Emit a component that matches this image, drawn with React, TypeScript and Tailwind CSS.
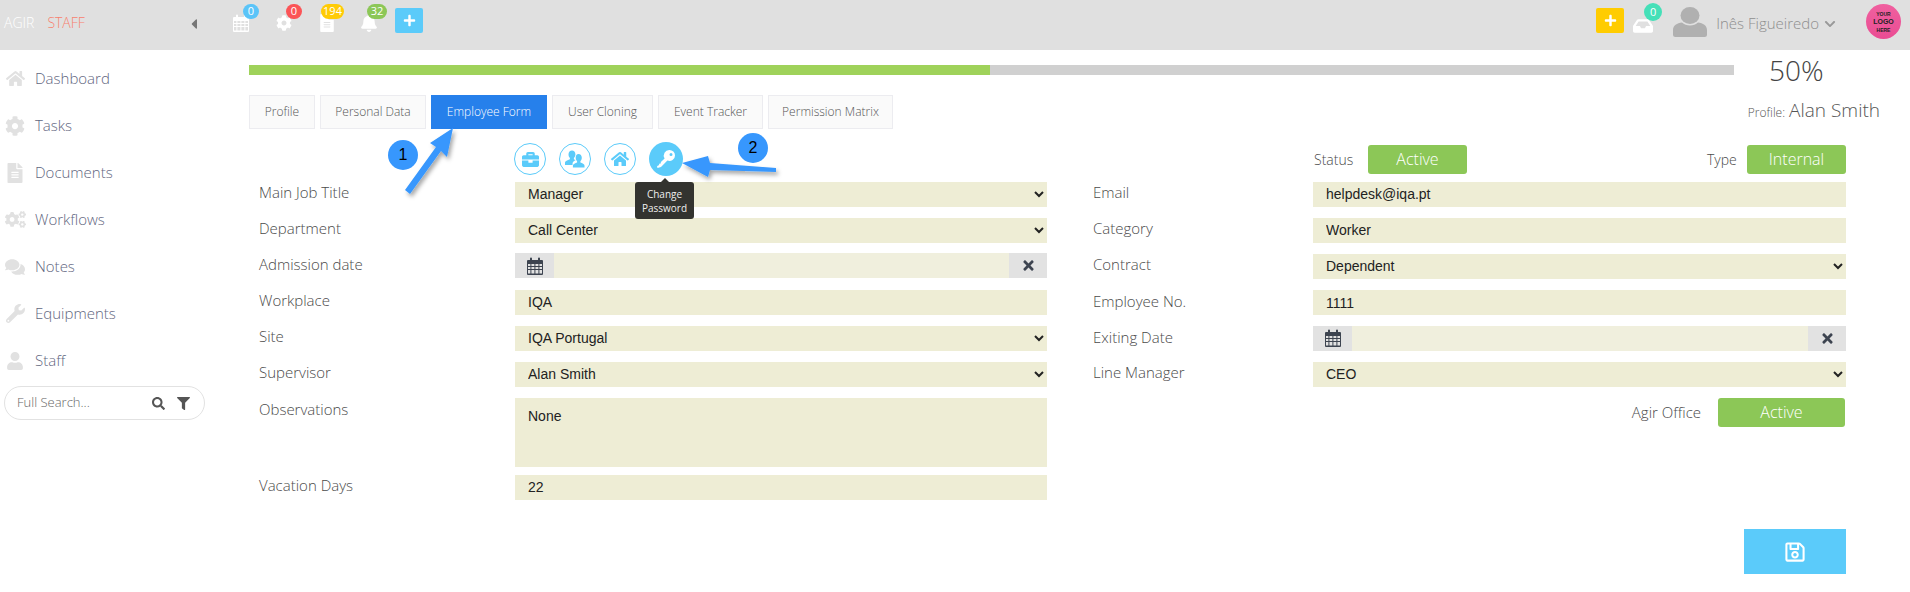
import React from "react";
import { FaHome, FaCog, FaFileAlt, FaCogs, FaComments, FaWrench, FaUser, FaSearch, FaFilter, FaBell, FaPlus, FaInbox, FaChevronDown, FaTimes, FaBriefcase, FaRegSave, FaCaretLeft } from "react-icons/fa";

const nav = [
  ["Dashboard", FaHome, "text-[19px]"],
  ["Tasks", FaCog, "text-[20px]"],
  ["Documents", FaFileAlt, "text-[20px]"],
  ["Workflows", FaCogs, "text-[21px]"],
  ["Notes", FaComments, "text-[20px]"],
  ["Equipments", FaWrench, "text-[19px]"],
  ["Staff", FaUser, "text-[18px]"],
] as const;

const tabs = [
  ["Profile", "w-[66px]"],
  ["Personal Data", "w-[106px]"],
  ["Employee Form", "w-[116px]"],
  ["User Cloning", "w-[101px]"],
  ["Event Tracker", "w-[105px]"],
  ["Permission Matrix", "w-[125px]"],
] as const;

function Badge({ text, cls }: { text: string; cls: string }) {
  return (
    <span className={`absolute -top-[11px] flex h-[15px] items-center justify-center rounded-full text-[11px] font-normal text-white ${cls}`}>
      {text}
    </span>
  );
}

function Label({ children }: { children: React.ReactNode }) {
  return <div className="text-[15px] font-light leading-[20px] text-[#4a4a4a]">{children}</div>;
}

const fieldCls = "h-[25px] w-full bg-[#eeedd5] font-['Liberation_Sans',Arial,sans-serif] text-[14px] text-[#222] outline-none";

function Sel({ v }: { v: string }) {
  return (
    <select defaultValue={v} className={`${fieldCls} pl-[9px]`}>
      <option>{v}</option>
    </select>
  );
}

function Inp({ v }: { v: string }) {
  return <input readOnly value={v} className={`${fieldCls} pl-[13px]`} />;
}

function CalIcon({ className }: { className?: string }) {
  return (
    <svg className={className} width="16" height="18" viewBox="0 0 16 18" fill="currentColor">
      <path fillRule="evenodd" d="M1 3h2V1.5a1 1 0 0 1 2 0V3h6V1.5a1 1 0 0 1 2 0V3h2a1 1 0 0 1 1 1v13a1 1 0 0 1-1 1H1a1 1 0 0 1-1-1V4a1 1 0 0 1 1-1Z M1 7v2h2.4V7Z M4.4 7v2h3V7Z M8.4 7v2h3V7Z M12.4 7v2H15V7Z M1 10v2h2.4v-2Z M4.4 10v2h3v-2Z M8.4 10v2h3v-2Z M12.4 10v2H15v-2Z M1 13v3.5h2.4V13Z M4.4 13v3.5h3V13Z M8.4 13v3.5h3V13Z M12.4 13v3.5H15V13Z" />
    </svg>
  );
}

function DateField() {
  return (
    <div className="flex h-[25px] w-full bg-[#f0efdd]">
      <div className="flex w-[39px] items-center justify-center bg-[#e2e2e2] text-[#3d4450]">
        <CalIcon />
      </div>
      <div className="flex-1" />
      <div className="flex w-[38px] items-center justify-center bg-[#e2e2e2]">
        <FaTimes className="text-[15px] text-[#3d4450]" />
      </div>
    </div>
  );
}

function Row({ label, labelW, children }: { label: string; labelW: string; children: React.ReactNode }) {
  return (
    <div className="flex items-start">
      <div className={`${labelW} mt-[1px] shrink-0`}>
        <Label>{label}</Label>
      </div>
      <div className="min-w-0 flex-1">{children}</div>
    </div>
  );
}

function Round({ children, active }: { children: React.ReactNode; active?: boolean }) {
  return (
    <div
      className={`flex shrink-0 items-center justify-center rounded-full ${
        active ? "h-[34px] w-[34px] bg-[#5bcbfa] text-white" : "h-[32px] w-[32px] border border-[#5bcbfa] bg-white text-[#5bcbfa]"
      }`}
    >
      {children}
    </div>
  );
}

function Pill({ text, cls }: { text: string; cls: string }) {
  return (
    <div className={`flex h-[29px] items-center justify-center rounded-[3px] bg-[#8cc757] text-[16px] font-light text-white ${cls}`}>
      {text}
    </div>
  );
}

function KeyIcon() {
  return (
    <svg width="22" height="22" viewBox="0 0 22 22" fill="currentColor">
      <path fillRule="evenodd" d="M14.5 2 a5.5 5.5 0 0 1 5.5 5.5 a5.5 5.5 0 0 1-7.6 5.1 L6 19 l-3.5 1 L2 18.5 l1-1 1-.2 .2-1.5 1.5-.2 .2-1.5 3.7-3.7 A5.5 5.5 0 0 1 14.5 2 Z M16 5 a1.5 1.5 0 1 0 0 3 a1.5 1.5 0 0 0 0-3 Z" />
    </svg>
  );
}

function TwoUsers() {
  return (
    <svg width="20" height="20" viewBox="0 0 20 20" fill="currentColor">
      <path d="M7 1.5c2 0 3.4 1.6 3.4 3.8 0 1.6-.7 3-1.5 3.7v1.2c.6.3 1.2.6 1.8.9-1.6.8-3.2 1.9-3.2 3.9v1H0v-2.4c0-1.6 2.5-2.4 4.9-3.4V9c-.8-.7-1.4-2.1-1.4-3.7C3.5 3.1 5 1.5 7 1.5Z" />
      <path d="M13.5 5c2 0 3.3 1.6 3.3 3.7 0 1.5-.6 2.8-1.4 3.5v1.3c1.8.8 4.1 1.4 4.1 3v2H7.9v-2c0-1.6 2.6-2.2 4.2-3v-1.3c-.8-.7-1.4-2-1.4-3.5 0-2.1 1-3.7 2.8-3.7Z" />
    </svg>
  );
}

function BigUser() {
  return (
    <svg className="ml-[20px] mt-[7px]" width="34" height="30" viewBox="0 0 34 30" fill="#b0b0b0">
      <ellipse cx="17" cy="8.5" rx="9.5" ry="8.5" />
      <path d="M9 15.5c2 2 5 3 8 3s6-1 8-3c5 .6 9 3 9 7.5v4.5a2.5 2.5 0 0 1-2.5 2.5h-29A2.5 2.5 0 0 1 0 27.500V23c0-4.500 4-6.900 9-7.500Z" />
    </svg>
  );
}

export default function App() {
  return (
    <div className="h-[592px] w-[1910px] overflow-hidden bg-white font-['Open_Sans',sans-serif]">
      <header className="flex h-[50px] items-start bg-[#e0e0e0]">
        <div className="flex w-[190px] shrink-0 items-center gap-[13px] pl-[4px] pt-[13px] text-[14px] font-light leading-[20px]">
          <span className="text-white">AGIR</span>
          <span className="text-[#f8806e]">STAFF</span>
        </div>
        <FaCaretLeft className="mt-[16px] w-[8px] text-[16px] text-[#777]" />
        <div className="ml-[35px] flex items-start">
          <div className="relative mt-[14px] h-[18px] w-[16px] text-white">
            <CalIcon />
            <Badge text="0" cls="left-[10px] w-[16px] !-top-[10px] bg-[#5bc4f8]" />
          </div>
          <div className="relative ml-[27px] mt-[15px] h-[16px] w-[16px] text-white">
            <FaCog className="text-[16px]" />
            <Badge text="0" cls="left-[10px] w-[16px] bg-[#fb5457]" />
          </div>
          <div className="relative ml-[26px] mt-[14px] h-[18px] w-[16px] text-white">
            <FaFileAlt className="text-[18px]" />
            <Badge text="194" cls="left-[3px] w-[23px] !-top-[10px] bg-[#ffcb05]" />
          </div>
          <div className="relative ml-[26px] mt-[14px] h-[18px] w-[17px] text-white">
            <FaBell className="text-[18px]" />
            <Badge text="32" cls="left-[7px] w-[20px] !-top-[10px] bg-[#8cc757]" />
          </div>
          <div className="ml-[18px] mt-[8px] flex h-[25px] w-[28px] items-center justify-center rounded-[2px] bg-[#5bcbfa]">
            <FaPlus className="text-[13px] text-white" />
          </div>
        </div>
        <div className="ml-auto flex items-start">
          <div className="mt-[8px] flex h-[25px] w-[28px] items-center justify-center rounded-[2px] bg-[#ffcc00]">
            <FaPlus className="text-[13px] text-white" />
          </div>
          <div className="relative ml-[9px] mt-[16px] h-[16px] w-[20px] text-white">
            <FaInbox className="text-[20px]" />
            <span className="absolute -top-[13px] left-[11px] flex h-[18px] w-[18px] items-center justify-center rounded-full bg-[#45e0b8] text-[11px] text-white">0</span>
          </div>
          <BigUser />
          <span className="ml-[9px] mt-[11px] text-[15px] font-light leading-[24px] text-[#8f8f8f]">Inês Figueiredo</span>
          <FaChevronDown className="ml-[5px] mt-[18px] text-[12px] text-[#999]" />
          <div className="ml-[30px] mr-[9px] mt-[4px] flex h-[35px] w-[35px] flex-col items-center justify-center rounded-full bg-gradient-to-b from-[#f0609f] to-[#ea4c93] font-['Liberation_Sans',sans-serif] font-bold leading-[8px] text-[#222]">
            <span className="text-[5px]">YOUR</span>
            <span className="text-[7px]">LOGO</span>
            <span className="text-[5px]">HERE</span>
          </div>
        </div>
      </header>

      <div className="flex">
        <aside className="w-[249px] shrink-0 pt-[5px]">
          {nav.map(([label, Icon, size]) => (
            <div key={label} className="flex h-[47px] items-center">
              <div className="flex w-[35px] justify-center pr-[5px] text-[#e1e1e1]">
                <Icon className={size} />
              </div>
              <span className="text-[15px] font-light text-[#5f6680]">{label}</span>
            </div>
          ))}
          <div className="ml-[4px] mt-[2px] flex h-[34px] w-[201px] items-center rounded-full border border-[#e2e2e2] pl-[12px] pr-[14px]">
            <span className="flex-1 text-[13px] font-light text-[#666]">Full Search...</span>
            <FaSearch className="text-[13px] text-[#555]" />
            <FaFilter className="ml-[12px] text-[13px] text-[#555]" />
          </div>
        </aside>

        <main className="relative w-[1597px] pt-[15px]">
          <div className="flex h-[10px] items-start">
            <div className="flex h-[10px] w-[1485px] shrink-0 bg-[#d0d0d0]">
              <div className="h-full w-[741px] bg-[#9fd25a]" />
            </div>
            <div className="ml-[35px] -mt-[15px] text-[28px] font-light leading-[40px] text-[#444]">50%</div>
          </div>

          <div className="flex w-[1631px] items-start justify-between">
            <div className="mt-[20px] flex gap-[5px]">
              {tabs.map(([t, w]) => (
                <div
                  key={t}
                  className={`flex h-[34px] items-center justify-center border text-[12px] font-light ${w} ${
                    t === "Employee Form" ? "border-[#2680eb] bg-[#2680eb] text-white" : "border-[#ececf0] bg-[#fafafa] text-[#555]"
                  }`}
                >
                  {t}
                </div>
              ))}
            </div>
            <div className="mt-[23px] flex items-baseline text-[#555]">
              <span className="text-[12px] font-light">Profile:</span>
              <span className="ml-[4px] text-[19px] font-light leading-[24px]">Alan Smith</span>
            </div>
          </div>

          <div className="mt-[13px] flex h-[34px] items-center">
            <div className="ml-[265px] flex items-center gap-[13px]">
              <Round><FaBriefcase className="text-[17px]" /></Round>
              <Round><TwoUsers /></Round>
              <Round><FaHome className="text-[18px]" /></Round>
              <Round active><KeyIcon /></Round>
            </div>
            <div className="ml-[631px] flex items-center">
              <span className="w-[54px] text-[14px] font-light text-[#4a4a4a]">Status</span>
              <Pill text="Active" cls="w-[99px]" />
            </div>
            <div className="ml-[240px] flex items-center">
              <span className="w-[40px] text-[14px] font-light text-[#4a4a4a]">Type</span>
              <Pill text="Internal" cls="w-[99px]" />
            </div>
          </div>

          <div className="mt-[5px] flex items-start">
            <div className="ml-[10px] flex w-[788px] flex-col gap-[10.7px]">
              <Row label="Main Job Title" labelW="w-[256px]"><Sel v="Manager" /></Row>
              <Row label="Department" labelW="w-[256px]"><Sel v="Call Center" /></Row>
              <Row label="Admission date" labelW="w-[256px]"><DateField /></Row>
              <Row label="Workplace" labelW="w-[256px]"><Inp v="IQA" /></Row>
              <Row label="Site" labelW="w-[256px]"><Sel v="IQA Portugal" /></Row>
              <Row label="Supervisor" labelW="w-[256px]"><Sel v="Alan Smith" /></Row>
              <Row label="Observations" labelW="w-[256px]">
                <textarea readOnly value="None" className={`${fieldCls} !h-[69px] resize-none pl-[13px] pt-[8px] block`} />
              </Row>
              <div className="-mt-[3px]">
                <Row label="Vacation Days" labelW="w-[256px]"><Inp v="22" /></Row>
              </div>
            </div>

            <div className="ml-[46px] flex w-[753px] flex-col gap-[10.7px]">
              <Row label="Email" labelW="w-[220px]"><Inp v="helpdesk@iqa.pt" /></Row>
              <Row label="Category" labelW="w-[220px]"><Inp v="Worker" /></Row>
              <Row label="Contract" labelW="w-[220px]"><Sel v="Dependent" /></Row>
              <Row label="Employee No." labelW="w-[220px]"><Inp v="1111" /></Row>
              <Row label="Exiting Date" labelW="w-[220px]"><DateField /></Row>
              <Row label="Line Manager" labelW="w-[220px]"><Sel v="CEO" /></Row>
              <div className="flex items-center justify-end pr-[1px]">
                <span className="mr-[17px] text-[15px] font-light text-[#4a4a4a]">Agir Office</span>
                <Pill text="Active" cls="w-[127px]" />
              </div>
              <div className="mt-[92px] flex justify-end">
                <div className="flex h-[45px] w-[102px] items-center justify-center bg-[#5bcbfa]">
                  <FaRegSave className="text-[22px] text-white" />
                </div>
              </div>
            </div>
          </div>

          {/* tooltip */}
          <div className="absolute left-[386px] top-[132px] flex h-[37px] w-[59px] flex-col items-center justify-center rounded-[3px] bg-[#33332f] text-center text-[10px] font-normal leading-[14px] text-[#eee]">
            <span className="absolute -top-[4px] left-[25px] h-0 w-0 border-x-[5px] border-b-[5px] border-x-transparent border-b-[#33332f]" />
            <span>Change</span>
            <span>Password</span>
          </div>

          {/* callout arrows */}
          <svg className="pointer-events-none absolute left-[140px] top-[60px] overflow-visible" width="400" height="100" viewBox="0 0 400 100">
            <defs>
              <filter id="sh" x="-30%" y="-30%" width="160%" height="160%">
                <feDropShadow dx="2" dy="3" stdDeviation="2" floodColor="#000" floodOpacity="0.35" />
              </filter>
            </defs>
            <path d="M64 18 L58 47 L52 41 L21 84 L16 80 L47 37 L41 33 Z" fill="#3797fd" filter="url(#sh)" />
            <path d="M293 53 L319 46 L321 53 L387 58 L387 62 L321 60 L319 67 Z" fill="#3797fd" filter="url(#sh)" />
          </svg>
          <div className="absolute left-[139px] top-[90px] flex h-[30px] w-[30px] items-center justify-center rounded-full bg-[#3797fd] font-['Liberation_Sans',sans-serif] text-[16px] text-black">1</div>
          <div className="absolute left-[489px] top-[83px] flex h-[30px] w-[30px] items-center justify-center rounded-full bg-[#3797fd] font-['Liberation_Sans',sans-serif] text-[16px] text-black">2</div>
        </main>
      </div>
    </div>
  );
}
